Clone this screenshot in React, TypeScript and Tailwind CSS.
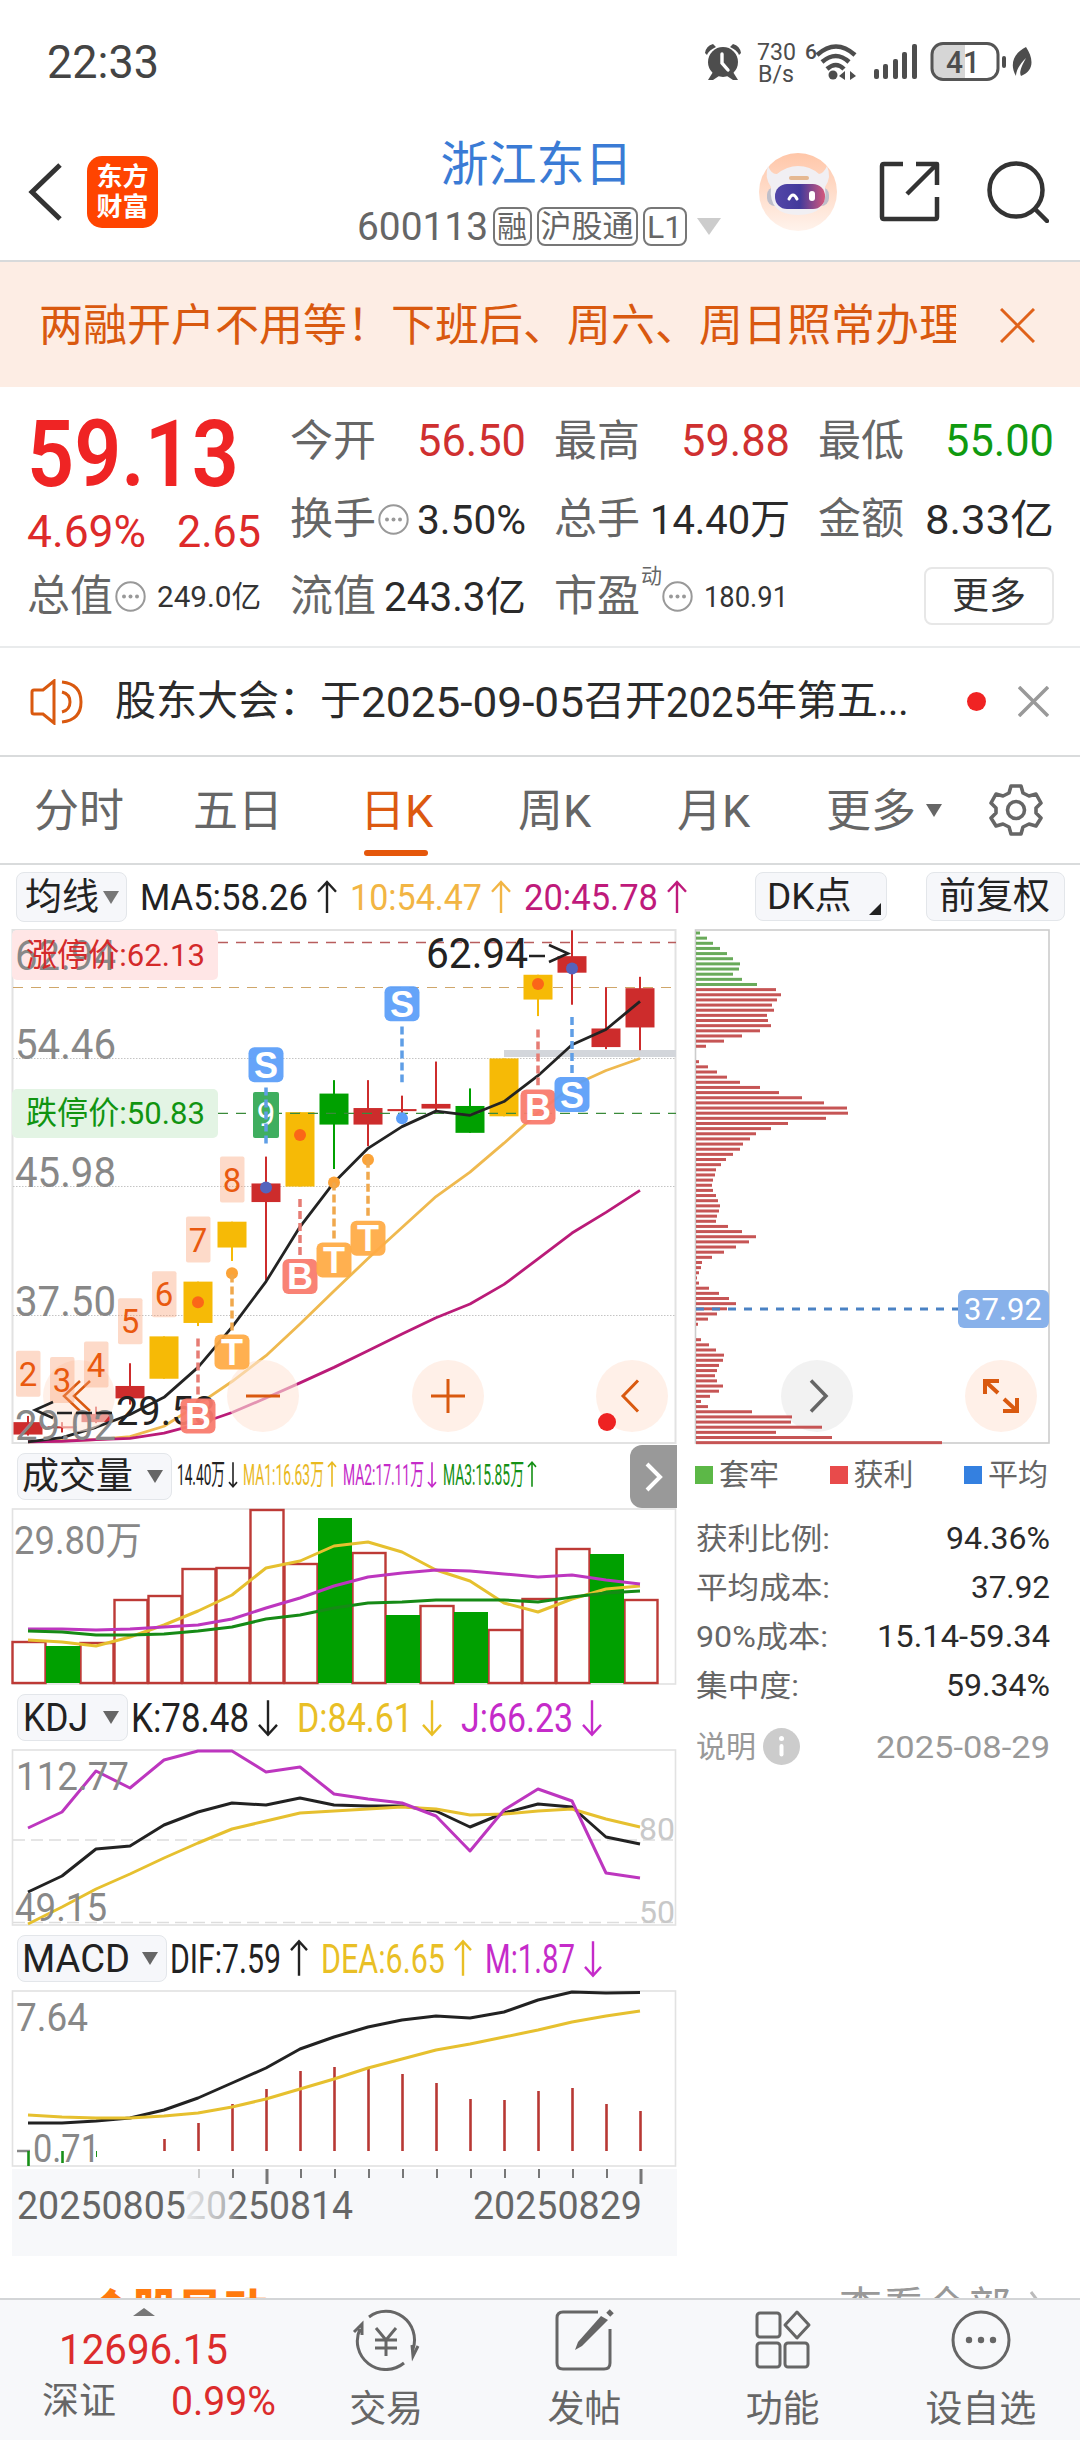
import type { ReactNode } from "react";

const GREEN = "#00a000";
const RED = "#cd2c2c";
const YELLOW = "#f6ba06";
const ORANGE = "#d9590f";

// every candle is 34px from the next one
const cx = (i: number) => 28 + 34 * i;
const points = (ys: number[]) => ys.map((y, i) => `${cx(i)},${y}`).join(" ");

const py = (y: number) => 920 + (y - 920) * 1.0332;

// body top, body bottom, high, low, colour
const candles: [number, number, number, number, string][] = [
  [1406, 1418, 1400, 1419, RED],
  [1410, 1412, 1406, 1416, RED],
  [1398, 1406, 1391, 1407, RED],
  [1371, 1383, 1349, 1389, RED],
  [1323, 1364, 1323, 1364, YELLOW],
  [1270, 1310, 1270, 1313, YELLOW],
  [1212, 1237, 1212, 1250, YELLOW],
  [1175, 1193, 1149, 1269, RED],
  [1106, 1178, 1106, 1178, YELLOW],
  [1088, 1118, 1075, 1161, GREEN],
  [1102, 1118, 1075, 1139, RED],
  [1103, 1105, 1090, 1117, RED],
  [1098, 1102.5, 1057, 1106, RED],
  [1100, 1126, 1083, 1126, GREEN],
  [1054, 1110, 1054, 1110, YELLOW],
  [973, 997, 973, 1013, YELLOW],
  [955, 971, 930, 1002, RED],
  [1025, 1043, 985, 1045, RED],
  [986, 1024, 975, 1046, RED],
];

const ma5 = [1425, 1421, 1411, 1398.6, 1382, 1353, 1314, 1270, 1217, 1174, 1141, 1120, 1105, 1109, 1095.7, 1070.7, 1040.7, 1026, 998.7];
const ma10 = [1425, 1424, 1423, 1420, 1410, 1389, 1366.7, 1341.7, 1311, 1279, 1247.7, 1217.7, 1187.7, 1164, 1136, 1106.7, 1080.7, 1065.7, 1054];
const ma20 = [1425, 1424.5, 1423, 1421.7, 1416.7, 1408, 1396.7, 1382.7, 1368, 1353, 1337, 1320.7, 1305, 1291.7, 1272.7, 1248, 1223, 1203, 1181.7];

const counts: [number, number, number][] = [
  [2, 28, 1337],
  [3, 62, 1343],
  [4, 96, 1328],
  [5, 130, 1286],
  [6, 164, 1260],
  [7, 198, 1207],
  [8, 232, 1149],
];

const tone: Record<string, string> = { S: "#5b9ef9", B: "#f97a6c", T: "#ffab45" };
const dash: Record<string, string> = { S: "#5f9ee6", B: "#e67c74", T: "#f0a84c" };

// letter, candle, badge centre, dash from, dash to, dot
const signals: [string, number, number, number, number, number, string][] = [
  ["B", 5, 1400, 1325, 1380, 1290, "#fb6618"],
  ["T", 6, 1338, 1263, 1320, 1262, "#fba338"],
  ["S", 7, 1060, 1082, 1137, 1179, "#5563bd"],
  ["B", 8, 1265, 1190, 1245, 1128, "#fb6618"],
  ["T", 9, 1249, 1174, 1230, 1174, "#fba338"],
  ["T", 10, 1228, 1152, 1208, 1152, "#fba338"],
  ["S", 11, 1001, 1023, 1077, 1112, "#5b9ef9"],
  ["B", 15, 1101, 1026, 1080, 982, "#fb6618"],
  ["S", 16, 1089, 1014, 1069, 967, "#5563bd"],
];

const chips = [
  4, 11, 17, 24, 31, 37, 44, 43, 37, 46, 61, 80, 85, 81, 76, 78, 71, 72, 75, 64, 46, 28, 10, 0, 0, 3, 12, 21, 31, 44,
  64, 83, 106, 128, 151, 152, 130, 92, 75, 60, 54, 47, 44, 37, 30, 25, 20, 19, 17, 16, 17, 20, 22, 24, 23, 21, 20, 32,
  46, 60, 53, 40, 28, 16, 6, 5, 3, 1, 3, 13, 23, 33, 40, 31, 21, 12, 2, 0, 0, 5, 13, 20, 28, 27, 23, 21, 19, 21, 27,
  23, 14, 5, 12, 56, 96, 95, 126, 80, 136, 246,
];

const volumeTops = [1642, 1646, 1643, 1600, 1596, 1569, 1568, 1510, 1564, 1518, 1553, 1615, 1606, 1612, 1630, 1599, 1549, 1554, 1600];
const volumeDown = [1, 9, 11, 13, 17];
const vol1 = [1640, 1642, 1646, 1637, 1625, 1611, 1595, 1568, 1561, 1546, 1542, 1552, 1570, 1581, 1603, 1612, 1599, 1589, 1586];
const vol2 = [1629, 1629, 1630, 1629, 1627, 1625, 1619, 1608, 1598, 1586, 1577, 1573, 1570, 1571, 1574, 1577, 1575, 1580, 1584];
const vol3 = [1631, 1632, 1635, 1635, 1634, 1631, 1627, 1619, 1615, 1608, 1603, 1602, 1600, 1600, 1600, 1602, 1597, 1593, 1591];

const kLine = [1892, 1876, 1849, 1846, 1825, 1812, 1803, 1805, 1798, 1805, 1806, 1806, 1811, 1827, 1813, 1804, 1807, 1837, 1844];
const dLine = [1924, 1907, 1889, 1874, 1858, 1843, 1829, 1821, 1813, 1811, 1809, 1807, 1809, 1815, 1814, 1811, 1809, 1819, 1827];
const jLine = [1828, 1812, 1771, 1788, 1760, 1751, 1751, 1772, 1767, 1794, 1799, 1803, 1816, 1851, 1810, 1789, 1801, 1873, 1878];

const dif = [2123, 2123, 2121, 2118, 2110, 2098, 2083, 2068, 2049, 2037, 2027, 2020, 2016, 2018, 2012, 2000, 1992, 1993, 1992.5];
const dea = [2115, 2117, 2118, 2118, 2116, 2113, 2107, 2099, 2089, 2079, 2068, 2059, 2050, 2044, 2037, 2030, 2022, 2016, 2011];
const macdTops = [2166, 2163, 2157, 2151, 2139, 2123, 2104, 2089, 2071, 2067, 2069, 2074, 2083, 2099, 2100, 2091, 2088, 2104, 2111];

function Fit({ text, width, size, color, weight = 400 }: { text: string; width: number; size: number; color: string; weight?: number }) {
  return (
    <svg width={width} height={size} className="shrink-0 overflow-visible">
      <text x="0" y={size * 0.85} fontSize={size} fontWeight={weight} fill={color} textLength={width} lengthAdjust="spacingAndGlyphs">
        {text}
      </text>
    </svg>
  );
}

function Readout({ text, width, size, color, up, arrow = 18 }: { text: string; width: number; size: number; color: string; up?: boolean; arrow?: number }) {
  const w = arrow / 2;
  return (
    <div className="flex shrink-0 items-center">
      <Fit text={text} width={width} size={size} color={color} />
      {arrow > 10 && <span className="w-[6px]" />}
      <svg width={arrow + 8} height={size} className={up ? "overflow-visible" : "overflow-visible rotate-180"}>
        <path
          d={`M${w + 4} ${size * 0.92}V${size * 0.08}M4 ${size * 0.1 + w}L${w + 4} ${size * 0.08}L${arrow + 4} ${size * 0.1 + w}`}
          fill="none"
          stroke={color}
          strokeWidth={size > 32 ? 2.4 : 1.6}
        />
      </svg>
    </div>
  );
}

function Caret({ className = "" }: { className?: string }) {
  return (
    <svg width="16" height="13" className={`shrink-0 ${className}`}>
      <path d="M0 0H16L8 13Z" fill="currentColor" />
    </svg>
  );
}

function Pick({ children, className = "" }: { children: ReactNode; className?: string }) {
  return (
    <button className={`flex shrink-0 items-center justify-between rounded-[8px] border-[1.5px] border-[#e3e6ea] bg-[#f6f7fa] text-[#222] leading-none whitespace-nowrap ${className}`}>
      {children}
    </button>
  );
}

function Dots() {
  return (
    <svg width="31" height="31" viewBox="0 0 31 31" className="shrink-0">
      <circle cx="15.5" cy="15.5" r="14.2" fill="none" stroke="#999" strokeWidth="2" />
      <circle cx="9" cy="15.5" r="2" fill="#999" />
      <circle cx="15.5" cy="15.5" r="2" fill="#999" />
      <circle cx="22" cy="15.5" r="2" fill="#999" />
    </svg>
  );
}

function Line({ ys, color, width = 3 }: { ys: number[]; color: string; width?: number }) {
  return <polyline points={points(ys)} fill="none" stroke={color} strokeWidth={width} strokeLinejoin="round" />;
}

function Label({ x, y, w, size, fill = "#888", children }: { x: number; y: number; w: number; size: number; fill?: string; children: string }) {
  return (
    <text x={x} y={y} fontSize={size} fill={fill} textLength={w} lengthAdjust="spacingAndGlyphs">
      {children}
    </text>
  );
}

function StatusBar() {
  return (
    <div className="flex h-[123px] items-center justify-between pl-[47px] pr-[48px]">
      <Fit text="22:33" width={112} size={46} color="#444" />
      <svg width="328" height="44" viewBox="704 39 328 44" fill="#4d4d4d">
        <circle cx="723" cy="61" r="15" />
        <path d="M705 52Q706 45 713 43L716 46Q709 49 707 54ZM741 52Q740 45 733 43L730 46Q737 49 739 54ZM708 79L713 71L719 75L713 79ZM738 79L733 71L727 75L733 79Z" />
        <path d="M722 53V62L728 69" fill="none" stroke="#fff" strokeWidth="3.4" strokeLinecap="round" />
        <text x="757" y="59" fontSize="24" textLength="39" lengthAdjust="spacingAndGlyphs">730</text>
        <text x="758" y="80.5" fontSize="23" textLength="36" lengthAdjust="spacingAndGlyphs">B/s</text>
        <text x="805" y="58" fontSize="21" fontWeight="500" textLength="11">6</text>
        <g fill="none" stroke="#4d4d4d" strokeWidth="4.5">
          <path d="M817 54Q836 37 855 54" />
          <path d="M822 61Q836 49 849 61" />
          <path d="M827 68Q836 60 844 68" />
        </g>
        <circle cx="833" cy="74" r="4.5" />
        <path d="M839 75L845 70V79ZM856 75L850 70V79Z" />
        <rect x="874" y="68" width="5" height="10" rx="2" />
        <rect x="883" y="63" width="5" height="15" rx="2" />
        <rect x="893" y="58" width="5" height="20" rx="2" />
        <rect x="902" y="51" width="5" height="27" rx="2" />
        <rect x="912" y="43" width="5" height="35" rx="2" />
        <path d="M943 43H965V78H943Q933 78 933 68V53Q933 43 943 43Z" fill="#d6d6d6" />
        <rect x="932" y="42.5" width="66" height="36" rx="11" fill="none" stroke="#555" strokeWidth="3" />
        <rect x="1002" y="55" width="4" height="12" rx="2" />
        <text x="946" y="72" fontSize="32" fontWeight="500" textLength="34" lengthAdjust="spacingAndGlyphs">41</text>
        <path d="M1026 46C1034 58 1034 70 1021 75C1019 72 1021 66 1026 57C1019 64 1016 70 1016 75C1009 63 1014 52 1026 46Z" />
      </svg>
    </div>
  );
}

function Header() {
  return (
    <header className="flex h-[139px] justify-between border-b-2 border-[#d8dadb] pl-[28px] pr-[31px]">
      <div className="flex w-[290px] items-center gap-[25px]">
        <svg width="34" height="58" viewBox="0 0 34 58" fill="none" stroke="#333" strokeWidth="5">
          <path d="M32 2L4 29L32 56" />
        </svg>
        <div className="flex h-[72px] w-[71px] flex-col items-center justify-center rounded-[15px] bg-[#ff4400] text-[26px] font-bold leading-[30px] text-white">
          <span>东方</span>
          <span>财富</span>
        </div>
      </div>
      <div className="flex flex-col items-center pt-[16px]">
        <h1 className="pr-[4px] text-[48px] leading-[52px] text-[#3a7bd5]">浙江东日</h1>
        <div className="mt-[16px] flex items-center gap-[5px] text-[33px] leading-none text-[#666]">
          <Fit text="600113" width={131} size={39} color="#666" />
          <span className="flex h-[39px] w-[39px] items-center justify-center rounded-[8px] border-2 border-[#777] text-[30px]">融</span>
          <span className="flex h-[39px] w-[101px] items-center justify-center rounded-[8px] border-2 border-[#777] text-[31px]">沪股通</span>
          <span className="flex h-[39px] w-[44px] items-center justify-center rounded-[8px] border-2 border-[#777] text-[32px]">L1</span>
          <svg width="24" height="17" className="ml-[5px]">
            <path d="M0 0H24L12 17Z" fill="#ccc" />
          </svg>
        </div>
      </div>
      <div className="flex items-center">
        <svg width="78" height="78" viewBox="0 0 78 78">
          <defs>
            <linearGradient id="halo" x2="0" y2="1">
              <stop offset="0" stopColor="#ffc6a8" />
              <stop offset="1" stopColor="#fff3ec" />
            </linearGradient>
            <linearGradient id="visor">
              <stop offset="0" stopColor="#5246a8" />
              <stop offset="0.5" stopColor="#433a9b" />
              <stop offset="1" stopColor="#d4587c" />
            </linearGradient>
          </defs>
          <circle cx="39" cy="39" r="39" fill="url(#halo)" />
          <rect x="8" y="34" width="62" height="19" rx="8" fill="#bfbfca" />
          <path d="M9 13Q13 22 18 21Q28 13 39 13Q51 13 60 21Q65 20 68 13Q73 24 66 34Q70 62 39 62Q9 62 12 34Q5 24 9 13Z" fill="#f1eff3" />
          <rect x="30" y="23" width="20" height="4" rx="2" fill="#e5b892" />
          <rect x="16" y="31" width="50" height="25" rx="12" fill="url(#visor)" />
          <path d="M30 46Q34 38 38 46" fill="none" stroke="#fff" strokeWidth="3" strokeLinecap="round" />
          <rect x="50" y="38" width="6" height="10" rx="3" fill="#fff" />
        </svg>
        <svg width="61" height="61" viewBox="0 0 61 61" fill="none" stroke="#333" strokeWidth="4.5" strokeLinejoin="round" className="ml-[42px]">
          <path d="M24 3H5Q3 3 3 5V56Q3 58 5 58H56Q58 58 58 56V36" />
          <path d="M37 3H58V24M57 4L28 33" />
        </svg>
        <svg width="62" height="62" viewBox="0 0 62 62" fill="none" stroke="#333" strokeWidth="4.5" className="ml-[47px]">
          <circle cx="29" cy="29" r="26.5" />
          <path d="M48 48L60 60" strokeLinecap="round" />
        </svg>
      </div>
    </header>
  );
}

function Cell({ label, dots, children }: { label: string; dots?: boolean; children?: ReactNode }) {
  return (
    <div className="flex items-center leading-none">
      <span className="mr-[2px] text-[43px] text-[#666]">{label}</span>
      {dots && <Dots />}
      <span className="grow" />
      {children}
    </div>
  );
}

function Quote() {
  return (
    <section className="flex h-[261px] gap-[29px] border-b-2 border-[#e9ebec] pl-[27px] pt-[15px]">
      <div className="w-[234px]">
        <div className="flex h-[102px] items-center">
          <Fit text="59.13" width={212} size={93} color="#ef2424" weight={600} />
        </div>
        <div className="flex h-[54px] items-center justify-between">
          <Fit text="4.69%" width={119} size={45} color="#dd2a2a" />
          <Fit text="2.65" width={84} size={45} color="#dd2a2a" />
        </div>
        <div className="flex h-[76px] justify-between">
          <Cell label="总值" dots />
          <div className="flex items-center">
            <Fit text="249.0亿" width={104} size={30} color="#333" />
          </div>
        </div>
      </div>
      <div className="grid grid-cols-[236px_236px_236px] grid-rows-[78px_78px_76px] gap-x-[28px]">
        <Cell label="今开"><Fit text="56.50" width={109} size={44} color="#cf3030" /></Cell>
        <Cell label="最高"><Fit text="59.88" width={109} size={44} color="#cf3030" /></Cell>
        <Cell label="最低"><Fit text="55.00" width={109} size={44} color="#109a10" /></Cell>
        <Cell label="换手" dots><Fit text="3.50%" width={109} size={41} color="#2a2a2a" /></Cell>
        <Cell label="总手"><Fit text="14.40万" width={140} size={41} color="#2a2a2a" /></Cell>
        <Cell label="金额"><Fit text="8.33亿" width={129} size={41} color="#2a2a2a" /></Cell>
        <Cell label="流值"><Fit text="243.3亿" width={142} size={41} color="#2a2a2a" /></Cell>
        <div className="flex items-center leading-none">
          <span className="text-[43px] text-[#666]">市盈</span>
          <span className="mb-[40px] ml-[1px] text-[21px] text-[#666]">动</span>
          <Dots />
          <span className="w-[11px]" />
          <Fit text="180.91" width={84} size={30} color="#333" />
        </div>
        <div className="flex items-center justify-end">
          <button className="flex h-[58px] w-[130px] items-center justify-center rounded-[8px] border-2 border-[#e7e7e7] text-[37px] leading-none text-[#333]">更多</button>
        </div>
      </div>
    </section>
  );
}

function Notice() {
  return (
    <div className="flex h-[109px] items-center border-b-2 border-[#d9dbdc] pl-[30px] pr-[31px] leading-none">
      <svg width="54" height="46" viewBox="0 0 54 46" fill="none" stroke={ORANGE} strokeWidth="3">
        <path d="M24 2V44L13 35H4Q2 35 2 33V13Q2 11 4 11H13ZM32 13Q40 15 40 23Q40 31 32 33M32 3Q51 5 51 23Q51 41 32 43" />
      </svg>
      <span className="ml-[31px] flex items-center text-[41px] whitespace-nowrap text-[#2b2b2b]">
        股东大会：于
        <Fit text="2025-09-05" width={223} size={42} color="#2b2b2b" />
        召开
        <Fit text="2025" width={90} size={42} color="#2b2b2b" />
        <span className="tracking-[-0.5px]">年第五...</span>
      </span>
      <span className="grow" />
      <span className="mr-[32px] h-[19px] w-[19px] rounded-full bg-[#f02323]" />
      <svg width="31" height="31" stroke="#999" strokeWidth="3.5">
        <path d="M1 1L30 30M30 1L1 30" />
      </svg>
    </div>
  );
}

const tabs = [
  { name: "分时", className: "ml-[34px] w-[159px]" },
  { name: "五日", className: "w-[167px]" },
  { name: "日K", className: "w-[158px] text-[#dc5910]", active: true },
  { name: "周K", className: "w-[159px]" },
  { name: "月K", className: "w-[149px]" },
];

function Tabs() {
  return (
    <nav className="flex h-[108px] items-center border-b-2 border-[#d9dbdc] text-[45px] leading-none text-[#666]">
      {tabs.map((t) => (
        <div key={t.name} className={`relative flex h-full shrink-0 items-center pt-[2px] ${t.className}`}>
          {t.name}
          {t.active && <span className="absolute bottom-[7px] left-[4px] h-[6px] w-[64px] rounded-[3px] bg-[#e5570b]" />}
        </div>
      ))}
      <span className="w-[100px] pt-[2px]">更多</span>
      <Caret className="text-[#666]" />
      <svg width="54" height="54" viewBox="0 0 54 54" fill="none" stroke="#666" strokeWidth="3.6" strokeLinejoin="round" className="ml-[47px]">
        <path d="M22 3H32L34 10L40 13L47 11L52 20L47 25V30L52 35L47 43L40 41L34 44L32 51H22L20 44L14 41L7 43L2 35L7 30V25L2 20L7 11L14 13L20 10Z" />
        <circle cx="27" cy="27" r="8.5" />
      </svg>
    </nav>
  );
}

function RoundButton({ x, grey, children }: { x: number; grey?: boolean; children: ReactNode }) {
  return (
    <g fill="none" stroke={grey ? "#666" : ORANGE} strokeWidth="3.5">
      <circle cx={x} cy="1396" r="36" fill={grey ? "#e9e9e9" : "#ffe6d9"} fillOpacity="0.6" stroke="none" />
      {children}
    </g>
  );
}

function CandleChart() {
  return (
    <svg width="666" height="516" viewBox="11 929 666 516" className="block">
      <rect x="12.5" y="930" width="663" height="513" fill="#fff" stroke="#e2e2e2" strokeWidth="2" />
      {[1058.5, 1186.5, 1315.5].map((y) => (
        <path key={y} d={`M13 ${y}H675`} stroke="#c4c4c4" strokeWidth="1" strokeDasharray="1.5 1.5" />
      ))}
      <path d="M218 942.5H676" stroke="#b85d5d" strokeWidth="1.3" strokeDasharray="10 8" />
      <path d="M13 987.5H676" stroke="#cfa66a" strokeWidth="1.2" strokeDasharray="10 8" />
      <rect x="504" y="1050" width="172" height="7" fill="#d3d6db" />
      {candles.map(([top, bottom, high, low, color], i) => (
        <g key={i} fill={color}>
          <rect x={cx(i) - 1} y={py(high)} width="2" height={py(low) - py(high)} />
          <rect x={cx(i) - 14.5} y={py(top)} width="29" height={py(bottom) - py(top)} />
        </g>
      ))}
      <path d="M218 1113.3H676" stroke="#3a8a3a" strokeWidth="1.3" strokeDasharray="10 8" />
      <Line ys={ma10.map(py)} color="#efb94f" width={2.8} />
      <Line ys={ma20.map(py)} color="#ba1b78" width={2.8} />
      <Line ys={ma5.map(py)} color="#232323" width={2.8} />

      <RoundButton x={79}>
        <path d="M80 1381L64 1396L80 1411M90 1381L74 1396L90 1411" strokeWidth="2.5" />
      </RoundButton>
      <RoundButton x={263}>
        <path d="M246 1396H280" strokeWidth="3" />
      </RoundButton>

      <rect x="12" y="930" width="206" height="50" rx="5" fill="#ffe6e6" />
      <rect x="12" y="1089" width="206" height="49" rx="5" fill="#e3f4e4" />
      <Label x={15} y={970} w={101} size={42}>62.94</Label>
      <Label x={15} y={1059} w={101} size={42}>54.46</Label>
      <Label x={15} y={1187} w={101} size={42}>45.98</Label>
      <Label x={15} y={1316} w={101} size={42}>37.50</Label>
      <Label x={15} y={1440} w={101} size={42}>29.02</Label>
      <Label x={26} y={966} w={179} size={32} fill="#d42a2a">涨停价:62.13</Label>
      <Label x={26} y={1124} w={179} size={32} fill="#119411">跌停价:50.83</Label>

      {counts.map(([n, x, y]) => (
        <g key={n}>
          <rect x={x - 12} y={py(y)} width="24.5" height="46" rx="2" fill="#fb9d70" fillOpacity="0.38" />
          <text x={x} y={py(y) + 35} fontSize="33" textAnchor="middle" fill="#e9590f">{n}</text>
        </g>
      ))}
      <rect x="253" y="1092" width="26" height="46" rx="2" fill="#3fae5f" />
      <text x="266" y="1126" fontSize="33" textAnchor="middle" fill="#fff">9</text>

      <path d="M53 1402L35 1410L53 1418M57 1413H72M76 1413H92M96 1413H112" fill="none" stroke="#222" strokeWidth="2.6" />
      <Label x={116} y={1425} w={100} size={41} fill="#222">29.53</Label>
      <Label x={426} y={968} w={102} size={42} fill="#222">62.94</Label>
      <path d="M529 956H545M549 945L568 953.500L549 962" fill="none" stroke="#222" strokeWidth="2.6" />

      {signals.map(([s, i, y, from, to, dot, dotColor]) => (
        <g key={i}>
          <circle cx={cx(i)} cy={py(dot)} r="6" fill={dotColor} />
          <path d={`M${cx(i)} ${py(from)}V${py(to)}`} stroke={dash[s]} strokeWidth="3.5" strokeDasharray="8 4" />
          <rect x={cx(i) - 17.5} y={py(y) - 17.5} width="35" height="35" rx="6" fill={tone[s]} fillOpacity="0.94" />
          <text x={cx(i)} y={py(y) + 13} fontSize="36" fontFamily="Liberation Sans" fontWeight="700" textAnchor="middle" fill="#fff">{s}</text>
        </g>
      ))}

      <RoundButton x={448}>
        <path d="M431 1396H465M448 1379V1413" strokeWidth="3" />
      </RoundButton>
      <RoundButton x={632}>
        <path d="M638 1380.500L623 1396L638 1411.500" strokeWidth="3" />
      </RoundButton>
      <circle cx="607" cy="1422" r="9" fill="#ee2222" />
    </svg>
  );
}

function ChipChart() {
  return (
    <svg width="356" height="516" viewBox="694 929 356 516" className="block">
      <rect x="695.5" y="930" width="353.5" height="513" fill="#fff" stroke="#ccc" strokeWidth="1.6" />
      <RoundButton x={817} grey>
        <path d="M811 1380.5L826 1396L811 1411.5" />
      </RoundButton>
      {chips.map((w, i) => (
        <rect key={i} x="696" y={931.5 + i * 5.148} width={w} height="3" fill={i < 11 ? "#69aa5a" : "#c65555"} />
      ))}
      <path d="M696 1309H958" stroke="#4a82c4" strokeWidth="3" strokeDasharray="8 8" />
      <rect x="958" y="1290" width="91" height="38" rx="6" fill="#88b1ea" />
      <Label x={964} y={1320} w={78} size={32} fill="#fff">37.92</Label>
      <RoundButton x={1001}>
        <path d="M985 1394V1381H999M985 1381L998 1393M1017 1398V1411H1003M1017 1411L1004 1399" strokeWidth="4" />
      </RoundButton>
    </svg>
  );
}

function VolumeChart() {
  return (
    <svg width="666" height="178" viewBox="11 1508 666 178" className="block">
      <rect x="12.5" y="1509" width="663" height="175" fill="#fff" stroke="#e2e2e2" strokeWidth="1.6" />
      <Label x={14} y={1554} w={128} size={39}>29.80万</Label>
      {volumeTops.map((top, i) =>
        volumeDown.includes(i) ? null : (
          <rect key={i} x={cx(i) - 15.5} y={top} width="33" height={1683 - top} fill="none" stroke="#bd3a36" strokeWidth="2.4" />
        )
      )}
      {volumeDown.map((i) => (
        <rect key={i} x={cx(i) - 16} y={volumeTops[i]} width="34" height={1683 - volumeTops[i]} fill={GREEN} />
      ))}
      <Line ys={vol1} color="#e6c02f" />
      <Line ys={vol2} color="#bd36bf" />
      <Line ys={vol3} color="#168a16" />
    </svg>
  );
}

function KdjChart() {
  return (
    <svg width="666" height="178" viewBox="11 1749 666 178" className="block">
      <rect x="12.5" y="1750" width="663" height="175" fill="#fff" stroke="#e2e2e2" strokeWidth="1.6" />
      <path d="M13 1840H675M13 1922.5H675" stroke="#ddd" strokeWidth="1.5" strokeDasharray="12 6" />
      <Line ys={kLine} color="#222" />
      <Line ys={dLine} color="#e6c02f" />
      <Line ys={jLine} color="#bd36bf" />
      <Label x={16} y={1789.5} w={113} size={38}>112.77</Label>
      <Label x={15} y={1921} w={92} size={38}>49.15</Label>
      <Label x={639} y={1840} w={36} size={31} fill="#c8c8c8">80</Label>
      <Label x={639} y={1922.5} w={36} size={31} fill="#c8c8c8">50</Label>
    </svg>
  );
}

function MacdChart() {
  return (
    <svg width="666" height="178" viewBox="11 1990 666 178" className="block">
      <rect x="12.5" y="1991" width="663" height="175" fill="#fff" stroke="#e2e2e2" strokeWidth="1.6" />
      <Label x={16} y={2031} w={72} size={38}>7.64</Label>
      <path d="M17 2151H30" stroke="#888" strokeWidth="2.5" />
      <Label x={33} y={2161.5} w={67} size={38}>0.71</Label>
      {macdTops.map((y, i) => (
        <path key={i} d={`M${cx(i) + 0.5} 2151V${y}`} stroke={i < 4 ? "#189018" : "#b83834"} strokeWidth={i === 2 ? 1 : 2.6} />
      ))}
      <Line ys={dif} color="#222" />
      <Line ys={dea} color="#e6c02f" />
    </svg>
  );
}

function TimeAxis() {
  return (
    <svg width="666" height="87" viewBox="11 2169 666 87" className="mt-px block">
      <defs>
        <linearGradient id="fade" x1="186" x2="240" y1="0" y2="0" gradientUnits="userSpaceOnUse">
          <stop offset="0" stopColor="#666" stopOpacity="0.1" />
          <stop offset="0.7" stopColor="#666" stopOpacity="0.45" />
          <stop offset="1" stopColor="#666" />
        </linearGradient>
      </defs>
      <rect x="12" y="2169" width="665" height="87" fill="#f7f8fa" />
      {Array.from({ length: 14 }, (_, n) => n + 5).map((i) => {
        const long = i === 7 || i === 18;
        return <path key={i} d={`M${cx(i) + 1} 2169V${long ? 2184 : 2178}`} stroke={i === 5 ? "#ccc" : "#777"} strokeWidth={long ? 3 : 2} />;
      })}
      <Label x={17} y={2219} w={169} size={38} fill="#666">20250805</Label>
      <Label x={185} y={2219} w={168} size={38} fill="url(#fade)">20250814</Label>
      <Label x={473} y={2219} w={169} size={38} fill="#666">20250829</Label>
    </svg>
  );
}

const legend = [
  { name: "套牢", className: "bg-[#5cb847]" },
  { name: "获利", className: "bg-[#e84b4b]" },
  { name: "平均", className: "bg-[#3480e0]" },
];

const stats = [
  { label: "获利比例:", value: "94.36%", labelWidth: 134, width: 104 },
  { label: "平均成本:", value: "37.92", labelWidth: 134, width: 79 },
  { label: "90%成本:", value: "15.14-59.34", labelWidth: 132, width: 173 },
  { label: "集中度:", value: "59.34%", labelWidth: 103, width: 104 },
];

function ChipPanel() {
  return (
    <aside className="ml-[17px] w-[356px]">
      <ChipChart />
      <div className="flex h-[68px] items-start justify-between pl-px pr-[2px] leading-none text-[30px] text-[#666]">
        {legend.map((l) => (
          <div key={l.name} className="flex h-[60px] items-center gap-[6px]">
            <span className={`h-[18px] w-[18px] ${l.className}`} />
            {l.name}
          </div>
        ))}
      </div>
      {stats.map((s) => (
        <div key={s.label} className="flex h-[49px] items-center justify-between pl-[2px]">
          <Fit text={s.label} width={s.labelWidth} size={30} color="#666" />
          <Fit text={s.value} width={s.width} size={32} color="#2a2a2a" />
        </div>
      ))}
      <div className="mt-[13px] flex h-[49px] items-center pl-[2px] leading-none text-[30px] text-[#999]">
        说明
        <svg width="37" height="37" className="ml-[7px]">
          <circle cx="18.5" cy="18.5" r="18.5" fill="#ccc" />
          <path d="M18.5 18V26.5" stroke="#fff" strokeWidth="4" strokeLinecap="round" />
          <circle cx="18.5" cy="10.5" r="2.5" fill="#fff" />
        </svg>
        <span className="grow" />
        <Fit text="2025-08-29" width={174} size={32} color="#999" />
      </div>
    </aside>
  );
}

function Charts() {
  return (
    <main className="h-[1433px] overflow-hidden">
      <div className="flex h-[64px] items-start pl-[16px] pt-[7px]">
        <Pick className="h-[50px] w-[111px] pl-[8px] pr-[7px] text-[37px]">
          均线
          <Caret className="text-[#777]" />
        </Pick>
        <div className="flex h-[50px] grow items-center pl-[13px]">
          <Readout text="MA5:58.26" width={168} size={37} color="#222" up />
          <span className="w-[10px]" />
          <Readout text="10:54.47" width={132} size={37} color="#f2b544" up />
          <span className="w-[10px]" />
          <Readout text="20:45.78" width={134} size={37} color="#bf1a7b" up />
        </div>
        <Pick className="relative mr-[39px] h-[49px] w-[132px] pl-[11px] text-[37px]">
          DK点
          <svg width="12" height="12" className="absolute bottom-[5px] right-[5px]">
            <path d="M12 0V12H0Z" fill="#222" />
          </svg>
        </Pick>
        <Pick className="mr-[15px] h-[49px] w-[139px] pl-[12px] text-[37px]">前复权</Pick>
      </div>
      <div className="flex pl-[11px]">
        <div className="w-[666px]">
          <CandleChart />
          <div className="flex h-[63px] items-start pl-[6px]">
            <Pick className="mt-[8px] h-[47px] w-[155px] pl-[4px] pr-[8px] text-[37px]">
              成交量
              <Caret className="text-[#666]" />
            </Pick>
            <div className="mt-[7px] flex h-[45px] items-center pl-[5px]">
              <Readout text="14.40万" width={48} size={29} color="#222" arrow={8} />
              <span className="w-[2px]" />
              <Readout text="MA1:16.63万" width={81} size={29} color="#e9b91f" arrow={8} up />
              <span className="w-[3px]" />
              <Readout text="MA2:17.11万" width={81} size={29} color="#c52bc9" arrow={8} />
              <span className="w-[3px]" />
              <Readout text="MA3:15.85万" width={81} size={29} color="#149014" arrow={8} up />
            </div>
            <span className="grow" />
            <button className="flex h-[63px] w-[47px] items-center justify-center rounded-l-[12px] bg-[#999]">
              <svg width="18" height="30" fill="none" stroke="#fff" strokeWidth="4">
                <path d="M2 2L15 15L2 28" />
              </svg>
            </button>
          </div>
          <VolumeChart />
          <div className="flex h-[63px] items-center pb-px pl-[6px]">
            <Pick className="h-[47px] w-[111px] pl-[5px] pr-[8px] text-[37px]">
              <Fit text="KDJ" width={65} size={39} color="#222" />
              <Caret className="text-[#666]" />
            </Pick>
            <span className="w-[3px]" />
            <Readout text="K:78.48" width={118} size={41} color="#222" />
            <span className="w-[16px]" />
            <Readout text="D:84.61" width={116} size={41} color="#e9bf26" />
            <span className="w-[16px]" />
            <Readout text="J:66.23" width={112} size={41} color="#c52bc9" />
          </div>
          <KdjChart />
          <div className="flex h-[63px] items-center pl-[6px]">
            <Pick className="h-[47px] w-[150px] pl-[4px] pr-[8px] text-[37px]">
              <Fit text="MACD" width={108} size={39} color="#222" />
              <Caret className="text-[#666]" />
            </Pick>
            <span className="w-[3px]" />
            <Readout text="DIF:7.59" width={111} size={41} color="#222" arrow={16} up />
            <span className="w-[10px]" />
            <Readout text="DEA:6.65" width={124} size={41} color="#e9bf26" arrow={16} up />
            <span className="w-[10px]" />
            <Readout text="M:1.87" width={90} size={41} color="#c52bc9" arrow={16} />
          </div>
          <MacdChart />
          <TimeAxis />
        </div>
        <ChipPanel />
      </div>
      <div className="flex justify-between pl-[88px] pr-[38px] pt-[31px] leading-none">
        <span className="pt-[2px] text-[45px] font-black text-[#ff7a0e]">个股异动</span>
        <span className="flex items-start gap-[18px] text-[43px] text-[#999]">
          查看全部
          <svg width="13" height="30" fill="none" stroke="#bbb" strokeWidth="3" className="mt-[3px]">
            <path d="M2 2L12 15L2 28" />
          </svg>
        </span>
      </div>
    </main>
  );
}

function NavItem({ label, children }: { label: string; children: ReactNode }) {
  return (
    <div className="flex flex-1 flex-col items-center pt-[9px] text-[37px] leading-none text-[#666]">
      <svg width="68" height="62" viewBox="0 0 68 62" fill="none" stroke="#666" strokeWidth="3">
        {children}
      </svg>
      <span className="mt-[20px]">{label}</span>
    </div>
  );
}

function BottomBar() {
  return (
    <footer className="flex h-[142px] border-t-2 border-[#d3d5d7] bg-[#f7f8fa]">
      <div className="flex w-[287px] flex-col items-center">
        <svg width="22" height="8" className="mt-[8px]">
          <path d="M0 8L11 0L22 8Z" fill="#777" />
        </svg>
        <div className="mt-[12px]">
          <Fit text="12696.15" width={169} size={42} color="#dc2c2c" />
        </div>
        <div className="mt-[11px] flex w-full items-center pl-[42px] text-[37px] leading-none text-[#666]">
          深证
          <span className="w-[55px]" />
          <Fit text="0.99%" width={105} size={40} color="#dc2c2c" />
        </div>
      </div>
      <NavItem label="交易">
        <path d="M17 8A28.5 28.5 0 0 1 61 40M66 37L61 47L60 36M52 54A28.5 28.5 0 0 1 8 20M2 23L10 15V26" />
        <path d="M24 19L34 31L44 19M34 31V47M23 31H45M23 39H45" />
      </NavItem>
      <NavItem label="发帖">
        <path d="M48 3H13Q7 3 7 9V54Q7 60 13 60H54Q60 60 60 54V20" />
        <path d="M51 7L58 11L32 37L25 41L28 33Z" fill="#666" stroke="none" />
        <path d="M58 2L62 6" strokeWidth="5" />
      </NavItem>
      <NavItem label="功能">
        <rect x="8" y="4" width="23" height="24" rx="3" />
        <rect x="8" y="34" width="23" height="24" rx="3" />
        <rect x="36" y="34" width="23" height="24" rx="3" />
        <path d="M48 3L60 16L48 29L36 16Z" strokeLinejoin="round" />
      </NavItem>
      <NavItem label="设自选">
        <circle cx="34" cy="31" r="28" />
        <g fill="#666" stroke="none">
          <circle cx="22" cy="31" r="3.2" />
          <circle cx="34" cy="31" r="3.2" />
          <circle cx="46" cy="31" r="3.2" />
        </g>
      </NavItem>
    </footer>
  );
}

export default function App() {
  return (
    <div className="h-[2440px] w-[1080px] overflow-hidden bg-white font-['Roboto','Noto_Sans_CJK_SC',sans-serif]">
      <StatusBar />
      <Header />
      <div className="flex h-[125px] items-center justify-between bg-[#fdede4] pl-[39px] pr-[45px] pt-[2px] leading-none">
        <span className="w-[917px] overflow-hidden text-[44px] leading-[60px] whitespace-nowrap text-[#d9590f]">
          两融开户不用等！下班后、周六、周日照常办理
        </span>
        <svg width="35" height="35" stroke="#e0621a" strokeWidth="3">
          <path d="M1 1L34 34M34 1L1 34" />
        </svg>
      </div>
      <Quote />
      <Notice />
      <Tabs />
      <Charts />
      <BottomBar />
    </div>
  );
}
